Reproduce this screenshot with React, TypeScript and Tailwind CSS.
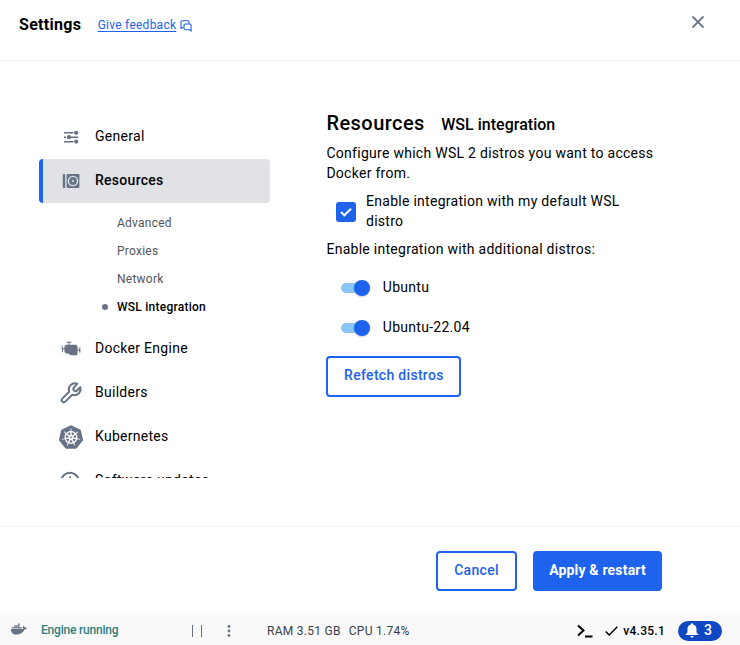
import type { ReactNode } from "react";
import { SiKubernetes } from "react-icons/si";
import { FaDocker } from "react-icons/fa";

const Svg = ({ className, box = "0 0 24 24", children }: { className: string; box?: string; children: ReactNode }) => (
  <svg viewBox={box} className={`block shrink-0 ${className}`} fill="none" stroke="currentColor" strokeWidth={2}>
    {children}
  </svg>
);

const Tune = () => (
  <Svg className="-mt-px h-[14px] w-4" box="0 0 16 14">
    <g strokeWidth={1.5}>
      <path d="M1 2.700h9.500M1 11.700h9.500M1 7.200h2M8 7.200h7.200" />
    </g>
    <g fill="currentColor" stroke="none">
      <circle cx="13.2" cy="2.8" r="2.1" />
      <circle cx="6" cy="7.2" r="2.1" />
      <circle cx="13.2" cy="11.6" r="2.1" />
    </g>
  </Svg>
);

const Disk = () => (
  <Svg className="h-4 w-[18px]" box="0 0 18 16">
    <g fill="currentColor" stroke="none">
      <rect x="0.8" y="1" width="2.4" height="14" rx="0.8" />
      <rect x="4.6" y="1" width="12.8" height="14" rx="1" />
    </g>
    <circle cx="11" cy="8" r="4.600" stroke="#e1e2e6" strokeWidth={1.4} />
    <circle cx="11" cy="8" r="1.1" fill="#e1e2e6" stroke="none" />
  </Svg>
);

const Engine = () => (
  <Svg className="-mt-px h-[15px] w-5" box="0 0 20 15">
    <g fill="currentColor" stroke="none">
      <path d="M5.200 3.800h9.800l1.500 1.500V13l-1 1.200H9.600L7 12.600H5L3.500 11V5z" />
      <path d="M5.500.8h5v1h-2v3h-1v-3h-2zM.8 4.800h1v6.500h-1zM1.500 7.300H4v1.200H1.500zM18.200 6.500h1.200v5h-1.200zM16 8.400h2.500v1.200H16z" />
    </g>
  </Svg>
);

const Wrench = () => (
  <Svg className="size-6">
    <path
      strokeWidth={2}
      strokeLinejoin="round"
      d="M14.6 7.2a1.2 1.2 0 0 0 0 1.7l1.1 1.1a1.2 1.2 0 0 0 1.7 0l3.9-3.9a6.2 6.2 0 0 1-8.1 7.6L6.3 20.6a2.1 2.1 0 0 1-3-3L10.2 10.700a6.200 6.200 0 0 1 8-8z"
    />
  </Svg>
);

const History = () => (
  <Svg className="size-6">
    <circle cx="11" cy="12.5" r="8.8" />
    <path d="M11 7.500v5l3 3" />
  </Svg>
);

const NavItem = ({ icon, label, active }: { icon: ReactNode; label: string; active?: boolean }) => (
  <div
    className={`flex h-11 shrink-0 items-center rounded-[4px] border-l-4 text-sm tracking-[0.28px] ${
      active ? "border-[#1d63ed] bg-[#e1e2e6] font-medium" : "border-transparent"
    }`}
  >
    <span className="ml-4 flex w-6 justify-center text-[#677285]">{icon}</span>
    <span className="ml-3 -mt-0.5">{label}</span>
  </div>
);

const Switch = ({ label }: { label: string }) => (
  <div className="flex h-10 items-center pl-[15px]">
    <span className="flex h-[10px] w-[29px] items-center justify-end rounded-full bg-[#8bc7f5]">
      <span className="size-4 shrink-0 rounded-full bg-[#1d63ed] shadow-[0_1px_2px_rgba(0,0,0,0.2)]" />
    </span>
    <span className="-mt-0.5 ml-[12.400px]">{label}</span>
  </div>
);

export default function App() {
  return (
    <div className="flex h-[645px] w-[740px] flex-col overflow-hidden bg-white font-['Roboto',sans-serif] text-black">
      <header className="flex h-[61px] shrink-0 border-b border-[#eeeeef] pl-[19px] pr-[36px]">
        <h1 className="mt-[13px] text-base font-bold leading-6 tracking-[0.3px]">Settings</h1>
        <a className="ml-[16.400px] mt-[17px] flex h-4 items-center text-xs leading-4 tracking-[0.25px] text-[#1d63ed]">
          <span className="underline underline-offset-2">Give feedback</span>
          <Svg className="ml-1 mt-0.5 size-3" box="0 0 12 12">
            <g strokeWidth={1.1} strokeLinejoin="round">
              <path d="M3.300 7.500H2.200L1 8.700V2Q1 .7 2.200.7h5.600q1.200 0 1.200 1.200v1.600" />
              <path d="M5.200 4h4.600q1.300 0 1.300 1.200v6L9.500 9.700H5.200q-1.200 0-1.200-1.200V5.200Q4 4 5.200 4z" />
            </g>
          </Svg>
        </a>
        <Svg className="ml-auto mt-4 size-3" box="0 0 12 12">
          <path strokeWidth={1.9} stroke="#677285" d="M.5.500l11 11M11.500.5l-11 11" />
        </Svg>
      </header>

      <main className="flex h-[465px] shrink-0 pl-[39px] pt-[54px]">
        <nav className="flex h-[363px] w-[231px] shrink-0 flex-col overflow-hidden">
          <NavItem icon={<Tune />} label="General" />
          <NavItem icon={<Disk />} label="Resources" active />
          <ul className="shrink-0 pb-1.5 pl-[78px] pt-1.5 text-xs leading-7 tracking-[0.25px] text-[#52555b]">
            <li>Advanced</li>
            <li>Proxies</li>
            <li>Network</li>
            <li className="-ml-[15px] flex items-center font-medium text-black">
              <span className="mr-[9px] size-1.5 rounded-full bg-[#677285]" />
              WSL integration
            </li>
          </ul>
          <NavItem icon={<Engine />} label="Docker Engine" />
          <NavItem icon={<Wrench />} label="Builders" />
          <NavItem icon={<SiKubernetes className="size-6" />} label="Kubernetes" />
          <NavItem icon={<History />} label="Software updates" />
        </nav>

        <section className="ml-[56.400px] w-[336px] text-sm leading-5 tracking-[0.28px]">
          <div className="-mt-[6px] flex items-baseline">
            <h2 className="text-xl font-medium leading-7 tracking-[0.45px]">Resources</h2>
            <h3 className="ml-[16.400px] text-base font-medium tracking-[0.02px]">WSL integration</h3>
          </div>
          <p className="mt-1.5">Configure which WSL 2 distros you want to access Docker from.</p>
          <div className="mt-2 flex items-center pl-[9.600px]">
            <span className="mt-[1px] flex size-5 items-center justify-center rounded-[3px] bg-[#1d63ed] text-white">
              <Svg className="size-3" box="0 0 12 12">
                <path d="M1 6l3.300 3.300L11 2.700" />
              </Svg>
            </span>
            <span className="ml-2.5 w-[270px]">Enable integration with my default WSL distro</span>
          </div>
          <p className="mb-[9px] mt-2">Enable integration with additional distros:</p>
          <Switch label="Ubuntu" />
          <Switch label="Ubuntu-22.04" />
          <button className="mt-2 h-[41px] w-[135px] rounded-[4px] border-2 border-[#1d63ed] pb-[3px] font-medium tracking-[0.3px] text-[#1d63ed]">
            Refetch distros
          </button>
        </section>
      </main>

      <footer className="flex h-[89px] shrink-0 justify-end gap-4 border-t border-[#eeeeef] pr-[78px] pt-6 text-sm">
        <button className="h-10 w-[81px] rounded-[4px] border-2 border-[#1d63ed] pb-0.5 font-medium tracking-[0.3px] text-[#1d63ed]">
          Cancel
        </button>
        <button className="h-10 w-[129px] rounded-[4px] bg-[#1d63ed] pb-0.5 font-bold tracking-[0.18px] text-white">
          Apply &amp; restart
        </button>
      </footer>

      <div className="flex h-[30px] shrink-0 items-center bg-[#f9f9fa] text-xs tracking-[0.25px]">
        <FaDocker className="-mt-0.5 ml-[11px] size-4 text-[#677285]" />
        <span className="ml-3.5 w-[151px] font-medium tracking-[-0.2px] text-[#2e7f7a]">Engine running</span>
        <span className="mt-0.5 flex h-3 w-[10px] justify-between border-x-[1.500px] border-[#677285]" />
        <Svg className="ml-[25px] mt-0.5 h-3 w-1 text-[#677285]" box="0 0 4 12">
          <g fill="currentColor" stroke="none">
            <circle cx="2" cy="1.500" r="1.400" />
            <circle cx="2" cy="6" r="1.400" />
            <circle cx="2" cy="10.500" r="1.400" />
          </g>
        </Svg>
        <span className="ml-9 mt-px tracking-[0.28px] text-[#393f49]">RAM 3.51 GB</span>
        <span className="ml-2 mt-px tracking-[0.28px] text-[#393f49]">CPU 1.74%</span>
        <div className="ml-auto mr-[18px] flex items-center">
          <Svg className="mt-0.5 h-[14px] w-4" box="0 0 16 14">
            <path d="M1 1.500l5.500 5L1 11.500M8 12.500h7.500" />
          </Svg>
          <Svg className="ml-3 mt-px h-[10px] w-[13px]" box="0 0 13 10">
            <path strokeWidth={1.5} d="M.7 5.500l3.500 3.500L12.300.8" />
          </Svg>
          <span className="ml-[5px] mt-px font-medium">v4.35.1</span>
          <span className="ml-[13px] mt-px flex h-5 w-11 items-center rounded-full bg-[#1048c4] pl-[7px] text-sm font-medium text-white">
            <Svg className="h-[15px] w-[14px]" box="0 0 14 15">
              <path
                fill="currentColor"
                stroke="none"
                d="M7 .3q1.200 0 1.200 1.200C10.600 2.100 11.500 4 11.500 6v3.500L13.300 11.300V12H.7v-.7L2.500 9.500V6c0-2 .9-3.900 3.300-4.500Q5.800.3 7 .3zM5.400 13h3.200a1.600 1.600 0 0 1-3.200 0z"
              />
            </Svg>
            <span className="ml-[5px] -mt-px">3</span>
          </span>
        </div>
      </div>
    </div>
  );
}
